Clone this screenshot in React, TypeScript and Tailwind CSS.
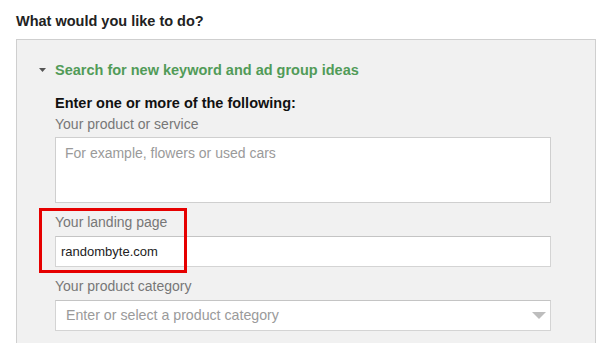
const LABEL = 'text-[14px] leading-[18px] text-[#777]'

function SelectArrow() {
  return (
    <svg width="14" height="7" viewBox="0 0 14 7" className="block">
      <path d="M0 0H14L7 7Z" fill="#bdbdbd" />
    </svg>
  )
}

export default function App() {
  return (
    <div className="relative w-[598px] h-[343px] overflow-hidden bg-white font-['Liberation_Sans',Arial,sans-serif]">
      <div className="pl-4 pt-3 text-[14.5px] leading-[18px] font-bold text-[#222]">
        What would you like to do?
      </div>

      <div className="ml-4 mt-[9px] w-[580px] h-[320px] border border-[#cfcfcf] bg-[#f1f1f1]">
        <div className="pt-[21px] pl-[22px] flex items-center gap-[9px]">
          <svg width="7" height="4" viewBox="0 0 7 4" className="block">
            <path d="M0 0H7L3.5 4Z" fill="#555" />
          </svg>
          <span className="text-[14.5px] leading-[18px] font-bold text-[#519b58]">
            Search for new keyword and ad group ideas
          </span>
        </div>

        <div className="pl-[38px] w-[534px]">
          <div className="mt-[15px] text-[14.5px] leading-[18px] font-bold text-[#111]">
            Enter one or more of the following:
          </div>

          <div className={`mt-[3px] ${LABEL}`}>Your product or service</div>
          <div className="mt-[4px] h-[66px] border border-[#cfcfcf] bg-white pt-[6px] pl-[9px] text-[14px] leading-[18px] text-[#9a9a9a]">
            For example, flowers or used cars
          </div>

          <div className={`mt-[10px] ${LABEL}`}>Your landing page</div>
          <div className="mt-[5px] h-[31px] flex items-center border border-[#d4d4d4] border-t-[#c4c4c4] bg-white pl-[5px] text-[13px] text-[#222]">
            randombyte.com
          </div>

          <div className={`mt-[10px] ${LABEL}`}>Your product category</div>
          <div className="mt-[5px] h-[31px] flex items-center justify-between border border-[#d4d4d4] border-t-[#c4c4c4] bg-white pl-[10px] pr-[4px] text-[14.2px] text-[#9a9a9a]">
            <span>Enter or select a product category</span>
            <SelectArrow />
          </div>
        </div>
      </div>

      {/* annotation */}
      <div className="absolute left-[39px] top-[208px] w-[148px] h-[65px] border-[3px] border-[#e60000]" />
    </div>
  )
}
